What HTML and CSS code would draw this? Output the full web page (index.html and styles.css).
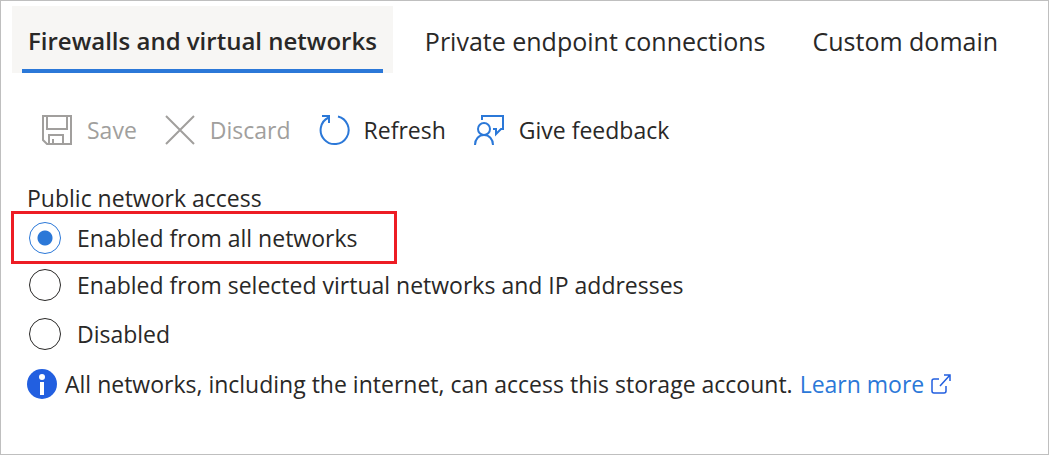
FILE: index.html
```html
<!DOCTYPE html>
<html lang="en">
<head>
<meta charset="utf-8">
<title>Networking</title>
<link rel="stylesheet" href="styles.css">
</head>
<body>
<main class="panel">
  <div class="tabs" role="tablist">
    <button class="tab tab-active" role="tab" aria-selected="true">Firewalls and virtual networks</button>
    <button class="tab" role="tab" aria-selected="false">Private endpoint connections</button>
    <button class="tab" role="tab" aria-selected="false">Custom domain</button>
  </div>
  <div class="toolbar">
    <button class="command" disabled>
      <svg class="icon" viewBox="0 0 32 32" aria-hidden="true"><path d="M2 2H30V30H6L2 26ZM6 2V15H26V2M8 30V21H22V30M12 30V25"/></svg>
      <span>Save</span>
    </button>
    <button class="command" disabled>
      <svg class="icon" viewBox="0 0 32 32" aria-hidden="true"><path d="M2 2L30 30M30 2L2 30"/></svg>
      <span>Discard</span>
    </button>
    <button class="command">
      <svg class="icon" viewBox="0 0 32 32" aria-hidden="true"><path d="M20 2.500A14 14 0 1 1 10.500 3.500M4 2H11V9"/></svg>
      <span>Refresh</span>
    </button>
    <button class="command">
      <svg class="icon" viewBox="0 0 32 32" aria-hidden="true"><circle cx="11" cy="15" r="6"/><path d="M2 31C2 25 6 21 11 21S20 25 20 31M9 6V2H30V15H28L23 20V15H20"/></svg>
      <span>Give feedback</span>
    </button>
  </div>
  <fieldset class="access">
    <legend class="legend">Public network access</legend>
    <label class="option option-marked"><input class="radio" type="radio" name="access" checked><span>Enabled from all networks</span></label>
    <label class="option"><input class="radio" type="radio" name="access"><span>Enabled from selected virtual networks and IP addresses</span></label>
    <label class="option"><input class="radio" type="radio" name="access"><span>Disabled</span></label>
  </fieldset>
  <div class="note">
    <svg class="info" viewBox="0 0 30 30" aria-hidden="true"><circle cx="15" cy="15" r="15" fill="#225fe0"/><circle cx="15" cy="8" r="3" fill="#fff"/><path d="M13 13H17V26H13Z" fill="#fff"/></svg>
    <p class="message">All networks, including the internet, can access this storage account.</p>
    <a class="link" href="#">Learn more
      <svg class="external" viewBox="0 0 20 20" aria-hidden="true"><path d="M8 5H3Q1 5 1 7V17Q1 19 3 19H13Q15 19 15 17V12M9 12L19 1M13 1H19V7"/></svg>
    </a>
  </div>
</main>
</body>
</html>
```
FILE: styles.css
```css
* {
  box-sizing: border-box;
}

body {
  margin: 0;
  color: #292827;
  background: #fff;
  font: 23px/32px "Segoe UI", "Open Sans", "Noto Sans", sans-serif;
}

button {
  border: 0;
  padding: 0;
  background: none;
  color: inherit;
  font: inherit;
}

.panel {
  min-height: 100vh;
  margin-right: 1px;
  padding: 5px 11px;
  border: 1px solid #bfbfbf;
}

.tabs {
  display: flex;
  gap: 17px;
}

.tab {
  padding: 19px 15px 16px;
  font-size: 25px;
  white-space: nowrap;
}

.tab-active {
  padding: 19px 16px 16px;
  background:
    linear-gradient(#2b78d8, #2b78d8) center bottom / calc(100% - 20px) 4px no-repeat,
    #f7f6f4;
  font-size: 24px;
  font-weight: 600;
}

.toolbar {
  display: flex;
  gap: 27px;
  margin: 41px 29px 0;
}

.command {
  display: flex;
  align-items: center;
  gap: 14px;
  white-space: nowrap;
}

.command:disabled {
  color: #a19f9d;
}

.icon {
  width: 32px;
  height: 32px;
  fill: none;
  stroke: #2b78d8;
  stroke-width: 2;
}

.command:disabled .icon {
  stroke: #a19f9d;
}

.access {
  margin: 36px 0 0 -1px;
  padding: 0;
  border: 0;
}

.legend {
  margin-bottom: -3px;
  padding: 0 16px;
}

.option {
  display: flex;
  align-items: center;
  gap: 16px;
  width: fit-content;
  height: 49px;
  padding: 0 18px;
}

.option-marked {
  width: 386px;
  height: 53px;
  margin-bottom: -4px;
  padding: 0 15px;
  border: 3px solid #ed1c24;
}

.radio {
  appearance: none;
  width: 32px;
  height: 32px;
  margin: 0;
  border: 1px solid #292827;
  border-radius: 50%;
}

.radio:checked {
  border-color: #2b78d8;
  background: radial-gradient(circle, #2b78d8 7px, transparent 8px);
}

.note {
  display: flex;
  align-items: center;
  margin: 10px 15px 0;
}

.info {
  flex: none;
  width: 30px;
  height: 30px;
  margin-right: 8px;
}

.message {
  margin: 0 7px 0 0;
}

.link {
  display: flex;
  align-items: center;
  gap: 7px;
  color: #2b78d8;
  text-decoration: none;
  white-space: nowrap;
}

.external {
  width: 20px;
  height: 20px;
  fill: none;
  stroke: #225fe0;
  stroke-width: 1.500;
}
```
